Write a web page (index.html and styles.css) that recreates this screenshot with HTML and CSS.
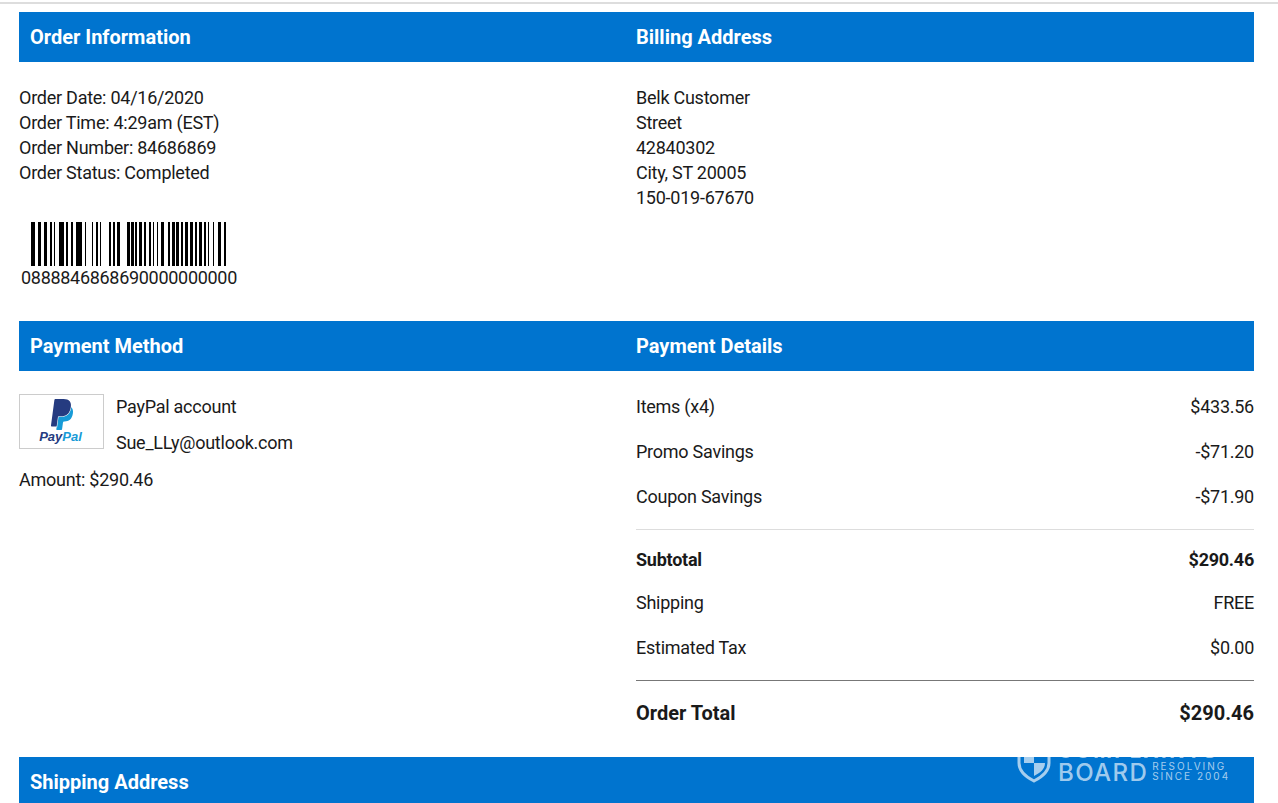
FILE: index.html
```html
<!DOCTYPE html>
<html lang="en">
<head>
<meta charset="utf-8">
<title>Order details</title>
<link rel="stylesheet" href="styles.css">
</head>
<body>
<div class="topline"></div>
<main class="page">
  <section class="band">
    <h2>Order Information</h2>
    <h2>Billing Address</h2>
  </section>
  <section class="cols info">
    <div>
      <div class="lines">
        <div>Order Date: 04/16/2020</div>
        <div>Order Time: 4:29am (EST)</div>
        <div>Order Number: 84686869</div>
        <div>Order Status: Completed</div>
      </div>
      <svg class="barcode" width="200" height="44" viewBox="30 0 200 44" fill="#000" aria-hidden="true">
        <rect x="31" width="4" height="44"/><rect x="38" width="3" height="44"/><rect x="44" width="3" height="44"/><rect x="50" width="2" height="44"/><rect x="54" width="1" height="44"/><rect x="59" width="5" height="44"/><rect x="66" width="2" height="44"/><rect x="71" width="2" height="44"/><rect x="76" width="6" height="44"/><rect x="85" width="1" height="44"/><rect x="92" width="1" height="44"/><rect x="96" width="2" height="44"/><rect x="100" width="1" height="44"/><rect x="109" width="2" height="44"/><rect x="113" width="2" height="44"/><rect x="117" width="3" height="44"/>
        <rect x="127" width="3" height="44"/><rect x="131" width="3" height="44"/><rect x="135" width="2" height="44"/><rect x="139" width="3" height="44"/><rect x="144" width="2" height="44"/><rect x="149" width="2" height="44"/><rect x="153" width="1" height="44"/><rect x="157" width="1" height="44"/><rect x="161" width="3" height="44"/><rect x="168" width="2" height="44"/><rect x="172" width="3" height="44"/><rect x="176" width="3" height="44"/><rect x="181" width="2" height="44"/><rect x="185" width="3" height="44"/><rect x="190" width="3" height="44"/><rect x="195" width="2" height="44"/><rect x="199" width="3" height="44"/><rect x="204" width="2" height="44"/><rect x="208" width="1" height="44"/><rect x="213" width="1" height="44"/><rect x="218" width="3" height="44"/><rect x="224" width="2" height="44"/>
      </svg>
      <div class="barcode-num">0888846868690000000000</div>
    </div>
    <div class="lines">
      <div>Belk Customer</div>
      <div>Street</div>
      <div>42840302</div>
      <div>City, ST 20005</div>
      <div>150-019-67670</div>
    </div>
  </section>
  <section class="band">
    <h2>Payment Method</h2>
    <h2>Payment Details</h2>
  </section>
  <section class="cols pay">
    <div>
      <div class="method">
        <div class="pp-box">
          <svg width="26" height="31" viewBox="0 0 24 24" preserveAspectRatio="none" aria-hidden="true">
            <path fill="#179bd7" d="M21.222 6.917a3.35 3.35 0 0 0-.607-.541c-.013.076-.026.175-.041.254-.93 4.778-4.005 7.201-9.138 7.201h-2.19a.563.563 0 0 0-.556.479l-1.187 7.527h-.506l-.24 1.516a.56.56 0 0 0 .554.647h3.882c.46 0 .85-.334.922-.788.06-.26.76-4.852.816-5.09a.932.932 0 0 1 .92-.788h.58c3.76 0 6.705-1.528 7.565-5.946.36-1.847.174-3.388-.774-4.471z"/>
            <path fill="#253b80" d="M7.076 21.337H2.47a.641.641 0 0 1-.633-.74L4.944.901C5.026.382 5.474 0 5.998 0h7.46c2.57 0 4.578.543 5.69 1.81 1.01 1.15 1.304 2.42 1.012 4.287-.023.143-.047.288-.077.437-.983 5.05-4.349 6.797-8.647 6.797h-2.19c-.524 0-.968.382-1.05.9l-1.12 7.106z"/>
          </svg>
          <span class="pp-word"><b>Pay</b><i>Pal</i></span>
        </div>
        <div class="method-text">
          <div>PayPal account</div>
          <div>Sue_LLy@outlook.com</div>
        </div>
      </div>
      <div class="amount">Amount: $290.46</div>
    </div>
    <div class="details">
      <div class="row"><span>Items (x4)</span><span>$433.56</span></div>
      <div class="row"><span>Promo Savings</span><span>-$71.20</span></div>
      <div class="row"><span>Coupon Savings</span><span>-$71.90</span></div>
      <div class="row subtotal"><span>Subtotal</span><span>$290.46</span></div>
      <div class="row shipping"><span>Shipping</span><span>FREE</span></div>
      <div class="row tax"><span>Estimated Tax</span><span>$0.00</span></div>
      <div class="row total"><span>Order Total</span><span>$290.46</span></div>
    </div>
  </section>
  <section class="band">
    <h2>Shipping Address</h2>
  </section>
</main>
<div class="mark">
  <svg width="34" height="40" viewBox="0 0 34 40" aria-hidden="true">
    <path fill="none" stroke="currentColor" stroke-width="3" d="M2 2h30v18c0 9-7 14-15 18C9 34 2 29 2 20z"/>
    <path fill="currentColor" d="M7 6h10v14H7zM17 20h11c0 6-5 10-11 13z"/>
  </svg>
  <div class="mark-text">
    <div class="mark-top">COMPLAINTS</div>
    <div class="mark-low"><span class="mark-board">BOARD</span><span class="mark-since">RESOLVING<br>SINCE 2004</span></div>
  </div>
</div>
</body>
</html>
```
FILE: styles.css
```css
html, body { margin: 0; padding: 0; height: 803px; overflow: hidden; background: #fff; }
body { font-family: Roboto, "Liberation Sans", sans-serif; font-size: 18px; line-height: 25px; letter-spacing: -.25px; color: #1a1a1a; position: relative; }
.topline { height: 2px; margin-top: 2px; background: #ddd; }
.page { padding: 8px 24px 0 19px; }
.band { display: grid; grid-template-columns: 617px 1fr; height: 50px; align-items: center; background: #0074cf; }
.band h2 { margin: 0; padding-left: 11px; font-size: 20px; font-weight: 700; letter-spacing: 0; color: #fff; }
.band h2 + h2 { padding-left: 0; }
.cols { display: grid; grid-template-columns: 617px 1fr; }
.info { padding-top: 23px; height: 259px; box-sizing: border-box; }
.barcode { display: block; margin: 37px 0 0 11px; }
.barcode-num { margin: 0 0 0 2px; line-height: 24px; letter-spacing: -.3px; white-space: nowrap; }
.pay { padding-top: 23px; height: 386px; box-sizing: border-box; }
.method { display: flex; gap: 12px; }
.pp-box { width: 85px; height: 55px; box-sizing: border-box; border: 1px solid #ccc; display: flex; flex-direction: column; align-items: center; padding-top: 4px; }
.pp-word { font: italic 700 13px/14px "Liberation Sans", sans-serif; letter-spacing: 0; margin-right: 2px; }
.pp-word b { color: #253b80; }
.pp-word i { color: #179bd7; font-weight: 700; }
.method-text { display: flex; flex-direction: column; gap: 11px; }
.amount { margin-top: 12px; }
.row { display: flex; justify-content: space-between; height: 45px; align-items: center; }
.details { margin-top: -10px; }
.subtotal { font-weight: 700; margin-top: 10px; padding-top: 7px; border-top: 1px solid #ddd; height: 44px; }
.shipping { height: 42px; }
.tax { height: 48px; }
.total { font-weight: 700; font-size: 20px; letter-spacing: 0; border-top: 1px solid #777; margin-top: 9px; height: 64px; }
.mark { position: absolute; left: 1017px; top: 743px; display: flex; gap: 7px; color: rgba(255,255,255,.65); }
.mark-text { display: flex; flex-direction: column; letter-spacing: 0; }
.mark-top { font: 700 20px/16px Inter, sans-serif; height: 16px; margin-bottom: 2px; letter-spacing: 2.5px; white-space: nowrap; }
.mark-low { display: flex; gap: 4px; align-items: flex-start; }
.mark-board { font: 500 24px/20px Inter, sans-serif; letter-spacing: 1.4px; margin-top: 2px; }
.mark-since { font: 400 10px/10px Inter, sans-serif; letter-spacing: 2px; white-space: nowrap; }
```
